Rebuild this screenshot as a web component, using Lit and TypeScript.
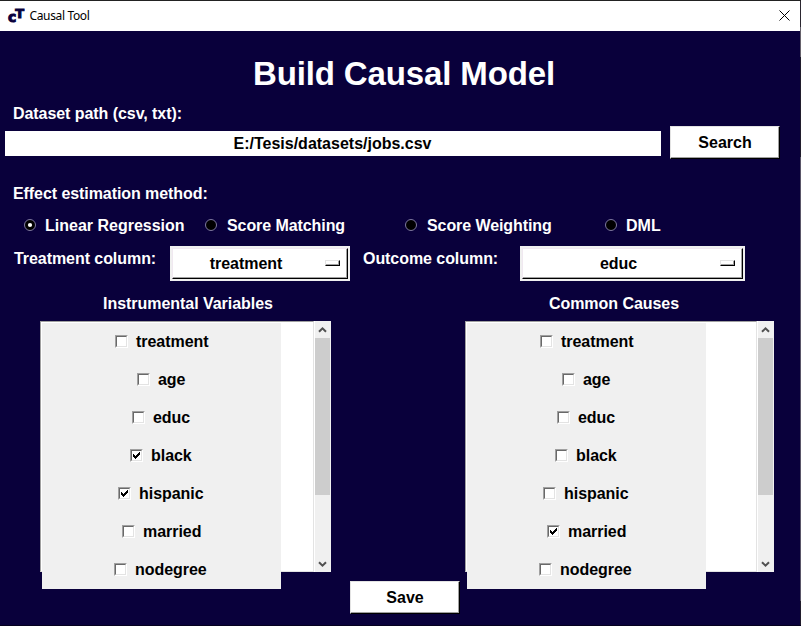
import { LitElement, html, css, svg, nothing } from "lit";
import { customElement, property } from "lit/decorators.js";

interface Variable {
  name: string;
  indent: number;
  checked: boolean;
}

const NAMES: [string, number][] = [
  ["treatment", 73],
  ["age", 95],
  ["educ", 90],
  ["black", 88],
  ["hispanic", 76],
  ["married", 80],
  ["nodegree", 72],
];

const pick = (...checked: string[]): Variable[] =>
  NAMES.map(([name, indent]) => ({ name, indent, checked: checked.includes(name) }));

@customElement("check-list")
class CheckList extends LitElement {
  @property({ attribute: false }) items: Variable[] = [];

  static styles = css`
    :host { display: flex; height: 251px; }
    .canvas {
      flex: 1; box-sizing: border-box; background: #fff;
      border: 1px solid #e3e3e3; border-top-color: #a0a0a0; border-left-color: #a0a0a0;
      padding: 1px 0 0 1px; height: 251px;
    }
    .panel {
      position: relative; width: 239px; height: 266px; background: #f0f0f0;
      display: flex; flex-direction: column;
    }
    .row { display: flex; height: 38px; flex: none; line-height: 18px; }
    .box {
      box-sizing: border-box; width: 13px; height: 13px; margin: 12px 8px 0 0; background: #fff;
      border: 1px solid #fff; border-top-color: #a0a0a0; border-left-color: #a0a0a0; flex: none;
    }
    .inner {
      box-sizing: border-box; width: 11px; height: 11px;
      border: 1px solid #e3e3e3; border-top-color: #696969; border-left-color: #696969;
    }
    .inner svg { display: block; width: 9px; height: 9px; }
    .name { margin-top: 10px; white-space: nowrap; letter-spacing: -0.04px; }
    .scroll {
      box-sizing: border-box; width: 17px; padding-right: 1px; background: #f0f0f0;
      border-left: 1px solid #fff; display: flex; flex-direction: column;
    }
    .arrow { height: 17px; display: block; width: 15px; flex: none; }
    .thumb { height: 157px; background: #cdcdcd; }
    .gap { flex: 1; }
  `;

  render() {
    return html`
      <div class="canvas">
        <div class="panel">
          ${this.items.map(
            (v) => html`<div class="row" style="padding-left:${v.indent}px">
              <span class="box"><div class="inner">${v.checked
                ? html`<svg viewBox="0 0 9 9" shape-rendering="crispEdges">
                    ${[3, 4, 5, 4, 3, 2, 1].map((y, x) => svg`<rect x=${x + 1} y=${y} width="1" height="3" />`)}
                  </svg>`
                : nothing}</div></span>
              <span class="name">${v.name}</span>
            </div>`
          )}
        </div>
      </div>
      <div class="scroll">
        <svg class="arrow" viewBox="0 0 15 17"><path d="M4 10.8L7.5 7.3L11 10.8" fill="none" stroke="#505050" stroke-width="2" /></svg>
        <div class="thumb"></div>
        <div class="gap"></div>
        <svg class="arrow" viewBox="0 0 15 17"><path d="M4 7.2L7.5 10.7L11 7.2" fill="none" stroke="#505050" stroke-width="2" /></svg>
      </div>`;
  }
}

@customElement("option-menu")
class OptionMenu extends LitElement {
  @property() value = "";

  static styles = css`
    :host { display: block; box-sizing: border-box; height: 35px; border: 2px solid #f0f0f0; background: #fff; }
    .face {
      box-sizing: border-box; height: 31px; display: flex; align-items: center;
      border: 1px solid #000; border-top-color: #f0e8f0; border-left-color: #f0e8f0;
      box-shadow: inset -1px -1px #a0a0a0; padding-right: 7px; line-height: 18px;
    }
    .value { flex: 1; text-align: center; padding-right: 6px; letter-spacing: -0.04px; }
    .mark {
      box-sizing: border-box; width: 15px; height: 6px; border: 1px solid #000; margin-bottom: 1px;
      border-top-color: #e3e3e3; border-left-color: #e3e3e3; box-shadow: inset -1px -1px #a0a0a0;
    }
  `;

  render() {
    return html`<div class="face"><span class="value">${this.value}</span><span class="mark"></span></div>`;
  }
}

@customElement("app-root")
class AppRoot extends LitElement {
  static styles = css`
    :host {
      display: flex; flex-direction: column; box-sizing: border-box; width: 801px; height: 626px; overflow: hidden;
      background:
        linear-gradient(#2b2730 0 26px, #66626c 26px 56px, #201c2c 56px 156px, #5a5668 156px 600px, #201c2c 600px) right / 1px 100% no-repeat,
        #09003b;
      color: #fff; border-top: 1px solid #222; padding-right: 1px;
      border-bottom: 1px solid #05001f;
      font: bold 16px/18px "Liberation Sans", Arial, sans-serif; white-space: nowrap;
    }
    .titlebar { height: 30px; flex: none; background: #fff; color: #000; display: flex; align-items: center; padding: 0 10px 0 7px; box-sizing: border-box; }
    .logo { width: 18px; height: 18px; margin-right: 4px; font-family: "DejaVu Sans", sans-serif; }
    .caption { flex: 1; font: 12px/16px "Noto Sans", sans-serif; letter-spacing: -0.35px; padding-left: 0.5px; }
    .close { width: 11px; height: 11px; margin-bottom: 2px; }
    h1 { margin: 24px 0 0 253px; font-size: 33px; line-height: 38px; height: 38px; letter-spacing: -0.13px; }
    .label { margin: 12px 0 0 13px; letter-spacing: -0.06px; }
    .path { display: flex; margin-top: 3px; padding-left: 5px; gap: 9px; align-items: flex-start; }
    .entry { width: 656px; height: 25px; line-height: 25px; background: #fff; color: #000; text-align: center; margin-top: 5px; text-indent: -1px; }
    .button {
      box-sizing: border-box; width: 110px; height: 33px; line-height: 32px; text-align: center; background: #fff; color: #000;
      border: 1px solid #000; border-top-color: #e3e3e3; border-left-color: #e3e3e3; box-shadow: inset -1px -1px #a0a0a0;
    }
    .method { margin: 26px 0 0 13px; letter-spacing: -0.07px; }
    .radios { display: grid; grid-template-columns: 181px 200px 200px 1fr; margin: 14px 0 0 24px; height: 18px; }
    .radio { display: flex; align-items: center; gap: 9px; }
    .score { gap: 10px; letter-spacing: -0.08px; }
    .dot { width: 12px; height: 12px; display: block; margin-bottom: 2px; }
    .columns { display: grid; grid-template-columns: 156px 180px 170px 225px; margin: 11px 0 0 14px; height: 35px; color: #000; }
    .columns span { color: #fff; margin-top: 4px; letter-spacing: -0.06px; }
    .columns .outcome { padding-left: 13px; }
    .lists { display: grid; grid-template-columns: 291px 309px; column-gap: 134px; margin: 14px 0 0 40px; }
    .heading { text-align: center; letter-spacing: -0.04px; }
    .iv { padding-left: 5px; }
    .cc { padding-right: 11px; }
    check-list { margin-top: 8px; color: #000; }
    .save { margin: 9px 0 0 350px; flex: none; }
  `;

  private radio(label: string, on = false) {
    return html`<div class="radio ${label.startsWith("Score") ? "score" : ""}">
      <svg class="dot" viewBox="0 0 12 12">
        <circle cx="6" cy="6" r="5.5" fill="#000" stroke="#7f78a0" />
        ${on ? svg`<circle cx="6" cy="6" r="2.1" fill="#fff" />` : nothing}
      </svg>
      <span>${label}</span>
    </div>`;
  }

  render() {
    return html`
      <div class="titlebar">
        <svg class="logo" viewBox="0 0 18 18" fill="#09003b" stroke="#09003b">
          <text x="1" y="14.7" font-size="14" stroke-width="1">c</text>
          <text x="8.2" y="10.7" font-size="13" stroke-width="1">T</text>
        </svg>
        <span class="caption">Causal Tool</span>
        <svg class="close" viewBox="0 0 11 11"><path d="M.5 .5L10.5 10.5M10.5 .5L.5 10.5" stroke="#000" /></svg>
      </div>
      <h1>Build Causal Model</h1>
      <div class="label">Dataset path (csv, txt):</div>
      <div class="path">
        <div class="entry">E:/Tesis/datasets/jobs.csv</div>
        <div class="button">Search</div>
      </div>
      <div class="method">Effect estimation method:</div>
      <div class="radios">
        ${this.radio("Linear Regression", true)} ${this.radio("Score Matching")}
        ${this.radio("Score Weighting")} ${this.radio("DML")}
      </div>
      <div class="columns">
        <span>Treatment column:</span>
        <option-menu value="treatment"></option-menu>
        <span class="outcome">Outcome column:</span>
        <option-menu value="educ"></option-menu>
      </div>
      <div class="lists">
        <div class="heading iv">Instrumental Variables</div>
        <div class="heading cc">Common Causes</div>
        <check-list .items=${pick("black", "hispanic")}></check-list>
        <check-list .items=${pick("married")}></check-list>
      </div>
      <div class="button save">Save</div>
    `;
  }
}
